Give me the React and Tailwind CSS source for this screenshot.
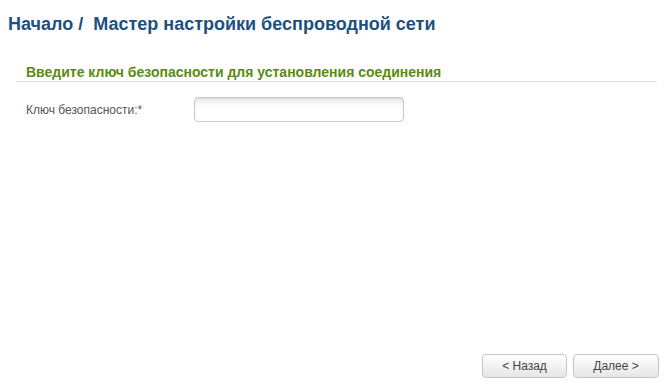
const App = () => {
  return (
    <div className="w-[665px] h-[385px] bg-white flex flex-col font-['Liberation_Sans',Arial,sans-serif]">
      <h1 className="pl-[8px] pt-[14px] text-[18px] leading-[20px] font-bold text-[#1d4f7f]">
        Начало /&nbsp; Мастер настройки беспроводной сети
      </h1>

      <div className="mt-[30px] ml-[16px] mr-[8px]">
        <div className="pl-[10px] pb-[1px] border-b border-[#e0e0e0] text-[14px] leading-[16px] font-bold text-[#5a8a14]">
          Введите ключ безопасности для установления соединения
        </div>
        <div className="flex items-center mt-[15px]">
          <label className="pl-[10px] w-[178px] text-[12px] text-[#555]">Ключ безопасности:*</label>
          <input
            type="password"
            className="w-[210px] h-[25px] rounded-[4px] border border-[#c8c8c8] bg-gradient-to-b from-[#ececec] to-white to-[45%] shadow-[inset_0_1px_2px_rgba(0,0,0,0.08)] outline-none px-2 text-[12px]"
          />
        </div>
      </div>

      <div className="flex-1" />

      <div className="flex justify-end gap-[6px] pr-[6px] pb-[7px]">
        <button className="w-[85px] h-[24px] rounded-[4px] border border-[#c4c4c4] bg-gradient-to-b from-white to-[#e6e6e6] text-[12px] text-[#444]">
          &lt; Назад
        </button>
        <button className="w-[86px] h-[24px] rounded-[4px] border border-[#c4c4c4] bg-gradient-to-b from-white to-[#e6e6e6] text-[12px] text-[#444]">
          Далее &gt;
        </button>
      </div>
    </div>
  );
};

export default App;
